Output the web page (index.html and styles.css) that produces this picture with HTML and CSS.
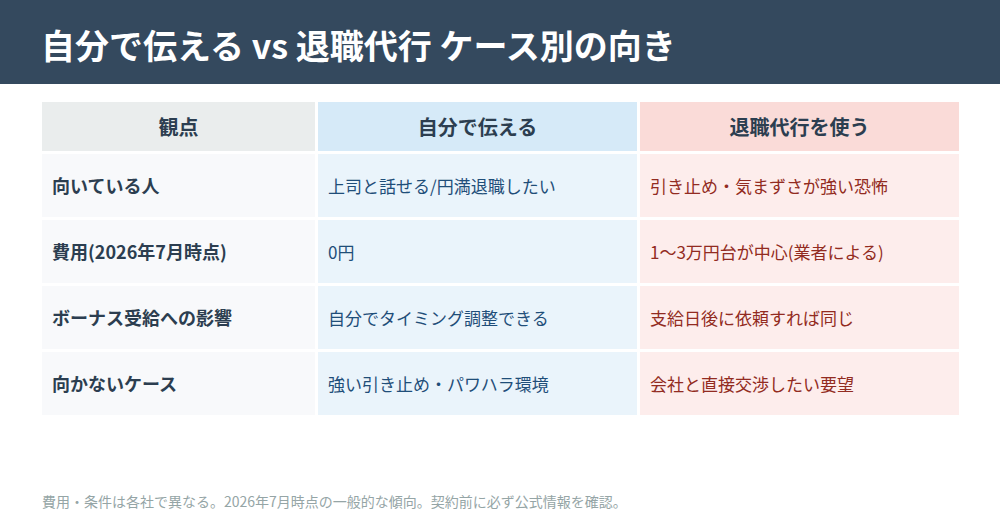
FILE: index.html
```html
<!DOCTYPE html>
<html lang="ja">
<head>
<meta charset="utf-8">
<link rel="stylesheet" href="styles.css">
</head>
<body>
<header class="banner"><h1 class="title">自分で伝える vs 退職代行 ケース別の向き</h1></header>
<main class="grid">
  <div class="cell head c1">観点</div>
  <div class="cell head c2">自分で伝える</div>
  <div class="cell head c3">退職代行を使う</div>

  <div class="cell label">向いている人</div>
  <div class="cell self">上司と話せる/円満退職したい</div>
  <div class="cell agent">引き止め・気まずさが強い恐怖</div>

  <div class="cell label">費用(2026年7月時点)</div>
  <div class="cell self">0円</div>
  <div class="cell agent">1〜3万円台が中心(業者による)</div>

  <div class="cell label">ボーナス受給への影響</div>
  <div class="cell self">自分でタイミング調整できる</div>
  <div class="cell agent">支給日後に依頼すれば同じ</div>

  <div class="cell label">向かないケース</div>
  <div class="cell self">強い引き止め・パワハラ環境</div>
  <div class="cell agent">会社と直接交渉したい要望</div>
</main>
<footer class="note">費用・条件は各社で異なる。2026年7月時点の一般的な傾向。契約前に必ず公式情報を確認。</footer>
</body>
</html>
```
FILE: styles.css
```css
html, body {
  margin: 0;
  padding: 0;
  background: #ffffff;
  font-family: "Noto Sans CJK JP", "Noto Sans", sans-serif;
}
.banner {
  height: 84px;
  background: #34495e;
  display: flex;
  align-items: center;
  padding-left: 41px;
}
.title {
  margin: 0;
  color: #ffffff;
  font-size: 34px;
  font-weight: 700;
  line-height: 1;
  padding-top: 5px;
}
.grid {
  margin: 18px 0 0 42px;
  width: 917px;
  display: grid;
  grid-template-columns: 273px 1fr 1fr;
  grid-template-rows: 49px repeat(4, 63px);
  gap: 3px;
}
.cell {
  display: flex;
  align-items: center;
  padding: 0 10px;
  font-size: 17px;
  line-height: 1.4;
}
.head {
  justify-content: center;
  font-weight: 700;
  font-size: 20px;
  color: #2c3e50;
}
.head.c1 { background: #eaeded; }
.head.c2 { background: #d6eaf8; }
.head.c3 { background: #fadbd8; }
.label {
  background: #f8f9fb;
  color: #2c3e50;
  font-weight: 700;
  font-size: 18px;
}
.self {
  background: #eaf4fb;
  color: #1f4e79;
}
.agent {
  background: #fdedec;
  color: #922b21;
}
.note {
  margin: 76px 0 0 42px;
  font-size: 14px;
  line-height: 20px;
  color: #95a5a6;
}
```
